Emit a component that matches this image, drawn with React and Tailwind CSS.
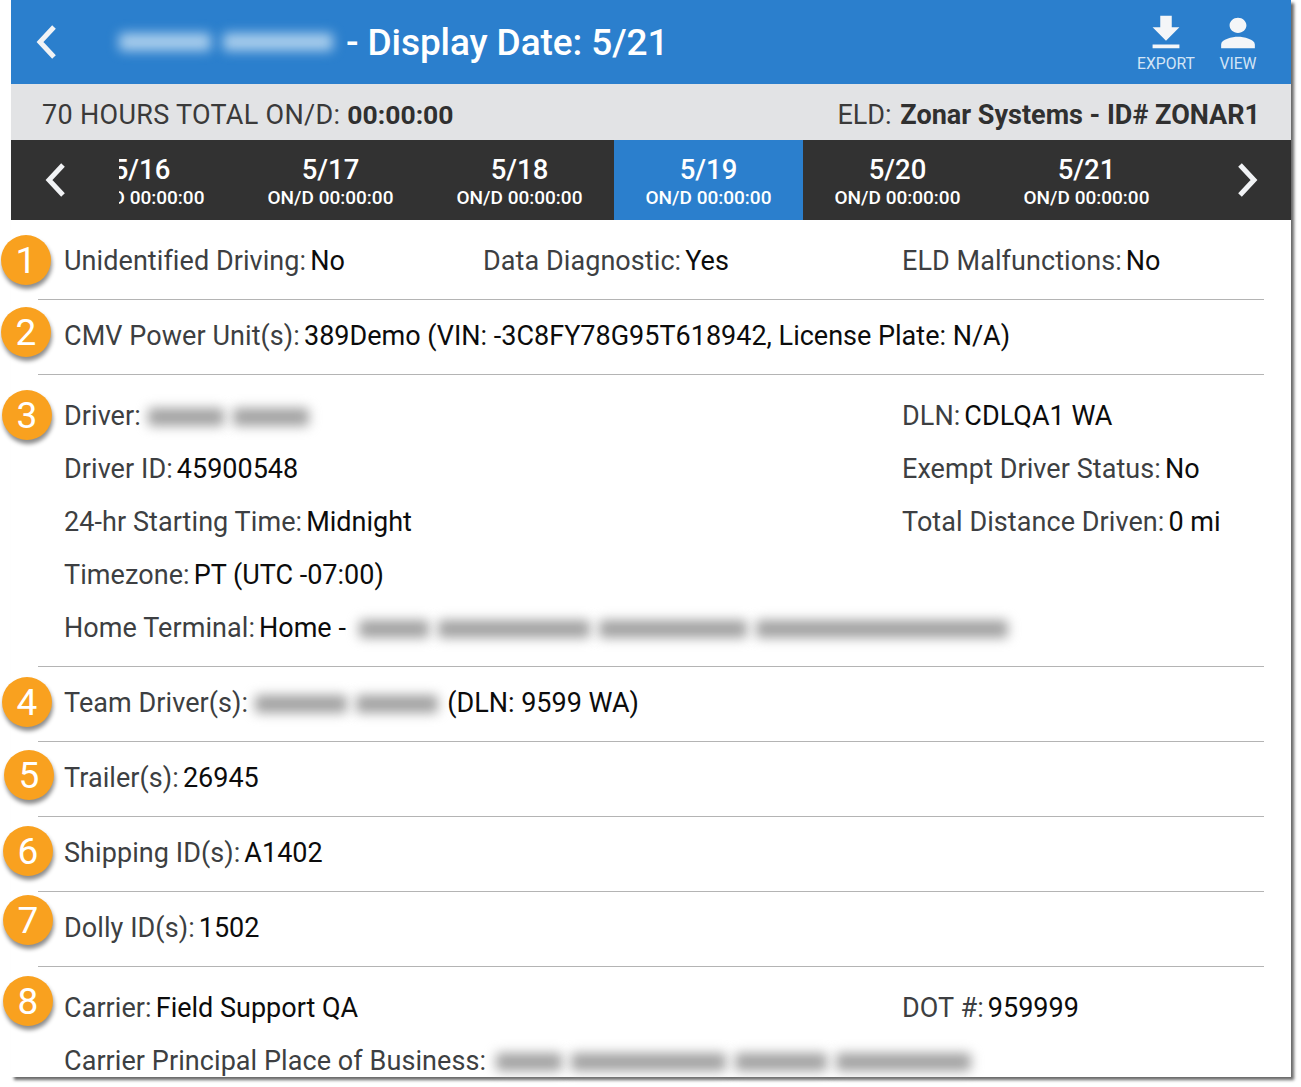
const roboto = "font-['Roboto',sans-serif]";

const Badge = ({ n, className = "" }) => (
  <div
    className={`absolute flex h-[50px] w-[50px] items-center justify-center rounded-full bg-[#f9a11f] text-[37px] leading-none text-white shadow-[1px_4px_4px_rgba(0,0,0,0.45)] ${className}`}
  >
    {n}
  </div>
);

const Field = ({ label, children }) => (
  <div className="flex items-center whitespace-nowrap">
    <span className="mr-[4px] tracking-[0.07px] text-[#3d3f42]">{label}:</span>
    <span className="flex items-center text-[#0c0c0c]">{children}</span>
  </div>
);

// redacted text in the screenshot, one soft blob per word group
const Blurred = ({ widths, tone = "bg-[#a2a2a2]", className = "" }) => (
  <span className={`inline-flex items-center gap-[9px] ${className}`}>
    {widths.map((w, i) => (
      <span key={i} className={`inline-block h-[18px] rounded-sm blur-[6px] ${tone} ${w}`} />
    ))}
  </span>
);

const Section = ({ n, badgeClass, className = "", children, last }) => (
  <section className={`relative mx-[27px] ${last ? "" : "border-b border-[#b4b4b4]"} ${className}`}>
    <Badge n={n} className={badgeClass} />
    <div className="pl-[26px]">{children}</div>
  </section>
);

const Tab = ({ date, active }) => (
  <div
    className={`flex h-[80px] w-[189px] shrink-0 flex-col items-center justify-center pt-[3px] text-white ${active ? "bg-[#2b7fcd]" : ""}`}
  >
    <div className="text-[27.5px] leading-[32px] font-medium">{date}</div>
    <div className="text-[19px] leading-[23px] font-medium">ON/D 00:00:00</div>
  </div>
);

const Chevron = ({ dir }) => (
  <svg width="24" height="36" viewBox="0 0 24 36" fill="none" stroke="currentColor" strokeWidth="5" className="text-[#f1f3f5]">
    <path d={dir === "left" ? "M19 3 5 18l14 15" : "M5 3l14 15L5 33"} />
  </svg>
);

export default function App() {
  return (
    <div className={`h-[1087px] w-[1301px] overflow-hidden bg-white ${roboto}`}>
      <div className="ml-[11px] h-[1077px] w-[1280px] bg-white shadow-[3px_3px_3px_rgba(0,0,0,0.6)]">
        <header className="flex h-[84px] items-center bg-[#2b7fcd] text-white">
          <div className="ml-[24px] w-[84px]">
            <Chevron dir="left" />
          </div>
          <Blurred widths={["w-[92px]", "w-[110px]"]} tone="bg-[#a8cdec]" className="gap-[12px]" />
          <h1 className="ml-[13px] pt-[2px] text-[37px] font-medium tracking-[-0.1px] whitespace-nowrap">- Display Date: 5/21</h1>
          <div className="ml-auto mr-[33px] flex gap-[22px] text-[#d3e5f6]">
            <div className="-mt-[2px] flex w-[60px] flex-col items-center">
              <svg width="46" height="46" viewBox="0 0 24 24" fill="#f4f6f8" className="-mb-[1px]">
                <path d="M19 9h-4V3H9v6H5l7 7 7-7zM5 18v2h14v-2H5z" />
              </svg>
              <span className="text-[15.7px] leading-[18px]">EXPORT</span>
            </div>
            <div className="-mt-[2px] flex w-[40px] flex-col items-center">
              <svg width="46" height="46" viewBox="0 0 24 24" fill="#f4f6f8" className="-mb-[1px] scale-x-[1.1]">
                <path d="M12 12c2.21 0 4-1.79 4-4s-1.79-4-4-4-4 1.79-4 4 1.79 4 4 4zm0 2c-2.67 0-8 1.34-8 4v2h16v-2c0-2.67-5.33-4-8-4z" />
              </svg>
              <span className="text-[15.7px] leading-[18px]">VIEW</span>
            </div>
          </div>
        </header>

        <div className="flex h-[56px] items-center justify-between bg-[#e2e3e5] pl-[31px] pr-[31px] pt-[6px] text-[27px] text-[#3a3a3a]">
          <div className="tracking-[0.3px]">
            70 HOURS TOTAL ON/D: <b className="text-[26.5px] font-bold tracking-normal text-[#303030]">00:00:00</b>
          </div>
          <div>
            ELD: <b className="ml-[2px] font-bold text-[#303030]">Zonar Systems - ID# ZONAR1</b>
          </div>
        </div>

        <nav className="flex h-[80px] items-center bg-[#323232]">
          <div className="ml-[33px] w-[75px]">
            <Chevron dir="left" />
          </div>
          <div className="w-[1062px] overflow-hidden">
            <div className="-ml-[72px] flex">
              <Tab date="5/16" />
              <Tab date="5/17" />
              <Tab date="5/18" />
              <Tab date="5/19" active />
              <Tab date="5/20" />
              <Tab date="5/21" />
            </div>
          </div>
          <div className="ml-[54px]">
            <Chevron dir="right" />
          </div>
        </nav>

        <div className="text-[27px] leading-[53px]">
          <Section n="1" badgeClass="left-[-37px] top-[15px]" className="h-[80px] pt-[15px]">
            <div className="grid grid-cols-[419px_419px_1fr]">
              <Field label="Unidentified Driving">No</Field>
              <Field label="Data Diagnostic">Yes</Field>
              <Field label="ELD Malfunctions">No</Field>
            </div>
          </Section>
          <Section n="2" badgeClass="left-[-37px] top-[7px]" className="h-[75px] pt-[10px]">
            <Field label="CMV Power Unit(s)">389Demo (VIN: -3C8FY78G95T618942, License Plate: N/A)</Field>
          </Section>
          <Section n="3" badgeClass="left-[-36px] top-[15px]" className="h-[292px] pt-[15px]">
            <div className="grid grid-cols-[838px_1fr]">
              <Field label="Driver"><Blurred widths={["w-[76px]", "w-[76px]"]} className="ml-[3px]" /></Field>
              <Field label="DLN">CDLQA1 WA</Field>
              <Field label="Driver ID">45900548</Field>
              <Field label="Exempt Driver Status">No</Field>
              <Field label="24-hr Starting Time">Midnight</Field>
              <Field label="Total Distance Driven">0 mi</Field>
              <div className="col-span-2">
                <Field label="Timezone">PT (UTC -07:00)</Field>
              </div>
              <div className="col-span-2">
                <Field label="Home Terminal">
                  Home -
                  <Blurred widths={["w-[70px]", "w-[152px]", "w-[148px]", "w-[252px]"]} className="ml-[13px]" />
                </Field>
              </div>
            </div>
          </Section>
          <Section n="4" badgeClass="left-[-36px] top-[10px]" className="h-[75px] pt-[10px]">
            <Field label="Team Driver(s)">
              <Blurred widths={["w-[92px]", "w-[82px]"]} className="mr-[9px] ml-[3px]" />
              (DLN: 9599 WA)
            </Field>
          </Section>
          <Section n="5" badgeClass="left-[-34px] top-[8px]" className="h-[75px] pt-[10px]">
            <Field label="Trailer(s)">26945</Field>
          </Section>
          <Section n="6" badgeClass="left-[-35px] top-[9px]" className="h-[75px] pt-[10px]">
            <Field label="Shipping ID(s)">A1402</Field>
          </Section>
          <Section n="7" badgeClass="left-[-35px] top-[3px]" className="h-[75px] pt-[10px]">
            <Field label="Dolly ID(s)">1502</Field>
          </Section>
          <Section n="8" badgeClass="left-[-35px] top-[9px]" className="h-[110px] pt-[15px]" last>
            <div className="grid grid-cols-[838px_1fr]">
              <Field label="Carrier">Field Support QA</Field>
              <Field label="DOT #">959999</Field>
              <div className="col-span-2">
                <Field label="Carrier Principal Place of Business">
                  <Blurred widths={["w-[66px]", "w-[155px]", "w-[92px]", "w-[135px]"]} className="ml-[6px]" />
                </Field>
              </div>
            </div>
          </Section>
        </div>
      </div>
    </div>
  );
}
